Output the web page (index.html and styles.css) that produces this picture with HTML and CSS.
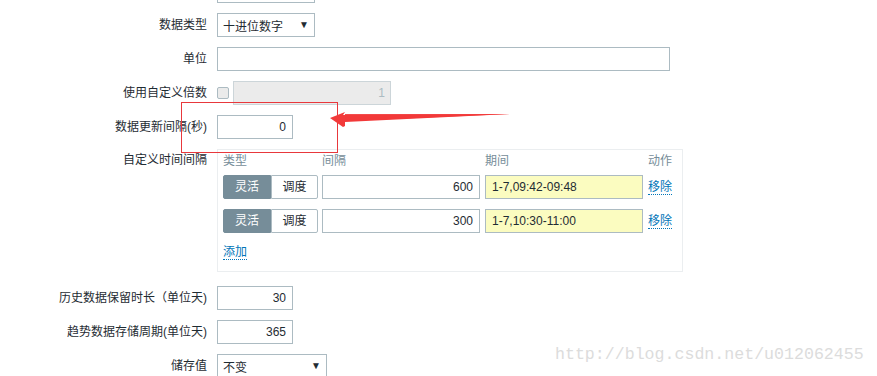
FILE: index.html
```html
<!DOCTYPE html>
<html lang="zh">
<head>
<meta charset="utf-8">
<link rel="stylesheet" href="styles.css">
</head>
<body>
<div class="page">
  <div class="form">
    <div class="label"></div>
    <div class="field"><div class="input w98"></div></div>

    <div class="label">数据类型</div>
    <div class="field"><div class="select w98"><span>十进位数字</span><span class="caret">▼</span></div></div>

    <div class="label">单位</div>
    <div class="field"><div class="input w452"></div></div>

    <div class="label">使用自定义倍数</div>
    <div class="field row-inline"><span class="checkbox"></span><div class="input disabled w158 num">1</div></div>

    <div class="label">数据更新间隔(秒)</div>
    <div class="field"><div class="input w75 num">0</div></div>

    <div class="label label-top">自定义时间间隔</div>
    <div class="field pad-bottom">
      <div class="intervals">
        <div class="th">类型</div>
        <div class="th">间隔</div>
        <div class="th">期间</div>
        <div class="th">动作</div>

        <div class="btn-group"><span class="btn active">灵活</span><span class="btn">调度</span></div>
        <div class="input w158 num">600</div>
        <div class="input w158 period">1-7,09:42-09:48</div>
        <div class="cell-link"><span class="link">移除</span></div>

        <div class="btn-group"><span class="btn active">灵活</span><span class="btn">调度</span></div>
        <div class="input w158 num">300</div>
        <div class="input w158 period">1-7,10:30-11:00</div>
        <div class="cell-link"><span class="link">移除</span></div>

        <div class="add-row"><span class="link">添加</span></div>
      </div>
    </div>

    <div class="label">历史数据保留时长（单位天)</div>
    <div class="field"><div class="input w75 num">30</div></div>

    <div class="label">趋势数据存储周期(单位天)</div>
    <div class="field"><div class="input w75 num">365</div></div>

    <div class="label">储存值</div>
    <div class="field"><div class="select w110"><span>不变</span><span class="caret">▼</span></div></div>
  </div>

  <div class="highlight"></div>
  <svg class="arrow" width="200" height="30" viewBox="0 0 200 30">
    <polygon points="0,8 15,2 13,5 180,4 15,12 15,16 13,17" fill="#f23a3a"/>
    <polygon points="15,4 180,4 15,11" fill="#f23a3a" opacity="0.9"/>
  </svg>
  <div class="watermark">http://blog.csdn.net/u012062455</div>
</div>
</body>
</html>
```

FILE: styles.css
```css
html, body {
  margin: 0;
  padding: 0;
  background: #ffffff;
  overflow: hidden;
}

body {
  font-family: "Liberation Sans", "Noto Sans CJK SC", sans-serif;
  font-size: 12px;
  color: #1f2c33;
}

.page {
  position: relative;
  width: 877px;
  height: 376px;
  overflow: hidden;
}

.form {
  display: grid;
  grid-template-columns: 207px 1fr;
  column-gap: 10px;
  row-gap: 10px;
  margin-top: -21px;
}

.label {
  text-align: right;
  line-height: 24px;
  height: 24px;
  white-space: nowrap;
}

.label-top {
  line-height: 14px;
  padding-top: 4px;
}

.field {
  display: flex;
  align-items: flex-start;
}

.pad-bottom {
  padding-bottom: 4px;
}

.row-inline {
  align-items: center;
  gap: 4px;
}

.input, .select {
  box-sizing: border-box;
  height: 24px;
  border: 1px solid #acbbc2;
  background: #ffffff;
  line-height: 22px;
  padding: 0 6px;
  white-space: nowrap;
}

.num {
  text-align: right;
}

.w75 { width: 76px; }
.w98 { width: 98px; }
.w110 { width: 110px; }
.w158 { width: 158px; }
.w452 { width: 453px; }

.select {
  display: flex;
  justify-content: space-between;
  padding: 0 5px 0 5px;
}

.select span:first-child {
  padding-top: 2px;
}

.caret {
  font-size: 10px;
  color: #1f2c33;
}

.disabled {
  background: #ebebeb;
  border-color: #ccd5d9;
  color: #acbbc2;
  padding-right: 5px;
}

.checkbox {
  box-sizing: border-box;
  width: 12px;
  height: 12px;
  border: 1px solid #acbbc2;
  border-radius: 2px;
  background: #ebebeb;
}

.intervals {
  box-sizing: border-box;
  width: 466px;
  border: 1px solid #ebeef0;
  padding: 4px 5px 11px 5px;
  display: grid;
  grid-template-columns: 99px 163px 163px 1fr;
  row-gap: 10px;
}

.th {
  color: #768d99;
  line-height: 14px;
  height: 14px;
  margin-bottom: -3px;
}

.btn-group {
  display: flex;
}

.btn {
  box-sizing: border-box;
  height: 24px;
  line-height: 22px;
  text-align: center;
  border: 1px solid #acbbc2;
  background: #ffffff;
  color: #1f2c33;
  width: 47px;
  border-radius: 0 2px 2px 0;
}

.btn.active {
  width: 48px;
  background: #768d99;
  border-color: #768d99;
  color: #ffffff;
  border-radius: 2px 0 0 2px;
}

.period {
  background: #fbfcc0;
}

.cell-link {
  line-height: 24px;
}

.link {
  color: #0275b8;
  border-bottom: 1px dotted #0275b8;
  line-height: 14px;
}

.add-row {
  grid-column: 1 / -1;
  line-height: 14px;
  height: 15px;
  margin-top: 2px;
}

.add-row .link {
  display: inline-block;
  line-height: 14px;
}

.highlight {
  position: absolute;
  left: 181px;
  top: 102px;
  width: 155px;
  height: 49px;
  border: 1px solid #e8383c;
}

.arrow {
  position: absolute;
  left: 330px;
  top: 110px;
}

.watermark {
  position: absolute;
  left: 555px;
  top: 345px;
  font-family: "Liberation Mono", monospace;
  font-size: 16.6px;
  color: #dcdcdc;
  white-space: nowrap;
}
```
